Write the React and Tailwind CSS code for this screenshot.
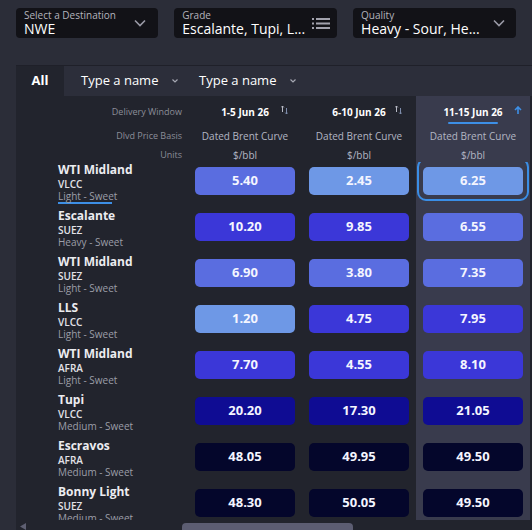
import React from 'react'

const grid = 'grid grid-cols-[172px_114px_114px_114px]'

const tone = {
  L: 'bg-[#6e98e6]',
  M: 'bg-[#5a6de0]',
  I: 'bg-[#3b37d8]',
  N: 'bg-[#0f0c93]',
  D: 'bg-[#04062b]',
}

const columns = [
  { window: '1-5 Jun 26', basis: 'Dated Brent Curve', units: '$/bbl' },
  { window: '6-10 Jun 26', basis: 'Dated Brent Curve', units: '$/bbl' },
  { window: '11-15 Jun 26', basis: 'Dated Brent Curve', units: '$/bbl', active: true },
]

const rows = [
  { name: 'WTI Midland', ship: 'VLCC', quality: 'Light - Sweet', cells: [['5.40', 'M'], ['2.45', 'L'], ['6.25', 'L']], selected: true },
  { name: 'Escalante', ship: 'SUEZ', quality: 'Heavy - Sweet', cells: [['10.20', 'I'], ['9.85', 'I'], ['6.55', 'M']] },
  { name: 'WTI Midland', ship: 'SUEZ', quality: 'Light - Sweet', cells: [['6.90', 'M'], ['3.80', 'M'], ['7.35', 'M']] },
  { name: 'LLS', ship: 'VLCC', quality: 'Light - Sweet', cells: [['1.20', 'L'], ['4.75', 'I'], ['7.95', 'I']] },
  { name: 'WTI Midland', ship: 'AFRA', quality: 'Light - Sweet', cells: [['7.70', 'I'], ['4.55', 'I'], ['8.10', 'I']] },
  { name: 'Tupi', ship: 'VLCC', quality: 'Medium - Sweet', cells: [['20.20', 'N'], ['17.30', 'N'], ['21.05', 'N']] },
  { name: 'Escravos', ship: 'AFRA', quality: 'Medium - Sweet', cells: [['48.05', 'D'], ['49.95', 'D'], ['49.50', 'D']] },
  { name: 'Bonny Light', ship: 'SUEZ', quality: 'Medium - Sweet', cells: [['48.30', 'D'], ['50.05', 'D'], ['49.50', 'D']] },
]

function Chevron() {
  return (
    <svg width="12" height="8" viewBox="0 0 12 8" fill="none">
      <path d="M1 1.5L6 6.5L11 1.5" stroke="#9a9aa6" strokeWidth="1.6" />
    </svg>
  )
}

function ListIcon() {
  return (
    <svg width="18" height="11" viewBox="0 0 18 11" fill="#a2a2ad">
      <rect x="0" y="0" width="2" height="2" />
      <rect x="4" y="0" width="14" height="2" />
      <rect x="0" y="4.5" width="2" height="2" />
      <rect x="4" y="4.5" width="14" height="2" />
      <rect x="0" y="9" width="2" height="2" />
      <rect x="4" y="9" width="14" height="2" />
    </svg>
  )
}

function SmallChevron() {
  return (
    <svg width="6" height="4" viewBox="0 0 6 4" fill="none">
      <path d="M0.5 0.5L3 3L5.5 0.5" stroke="#a6a7b2" strokeWidth="1.2" />
    </svg>
  )
}

function SortIcon() {
  return (
    <svg width="7" height="10" viewBox="0 0 7 10" fill="none">
      <path d="M1.5 7V1M0.2 2.4L1.5 1L2.8 2.4" stroke="#b9bbc6" />
      <path d="M5.5 3V9M4.2 7.6L5.5 9L6.8 7.6" stroke="#7e8cab" />
    </svg>
  )
}

function ArrowUp() {
  return (
    <svg width="8" height="8" viewBox="0 0 8 8" fill="none">
      <path d="M4 8V1.2M1 4L4 1L7 4" stroke="#3d8fe6" strokeWidth="1.6" />
    </svg>
  )
}

function Select({ label, value, className, icon }) {
  return (
    <div className={`${className} h-[30px] rounded-[4px] bg-[#121217] pl-2 flex items-center`}>
      <div className="flex-1 min-w-0 pt-[1px]">
        <div className="text-[10px] leading-[11px] text-[#b4b4bd]">{label}</div>
        <div className="text-[14px] leading-[16px] text-white whitespace-nowrap">{value}</div>
      </div>
      {icon}
    </div>
  )
}

export default function App() {
  return (
    <div className="w-[532px] h-[530px] overflow-hidden bg-[#2b2d38] font-['Open_Sans',sans-serif]">
      <div className="h-[65px] flex gap-4 px-4 pt-2">
        <Select className="w-[144px] pr-3" label="Select a Destination" value="NWE" icon={<Chevron />} />
        <Select className="w-[165px] pr-[7px]" label="Grade" value="Escalante, Tupi, L..." icon={<ListIcon />} />
        <Select className="w-[165px] pr-[11px]" label="Quality" value="Heavy - Sour, He..." icon={<Chevron />} />
      </div>

      <div className="ml-4 border-t border-[#1f2029]">
        <div className="h-[30px] flex items-center bg-[#2c2e3a] text-[13px] text-white">
          <div className="w-[48px] h-full bg-[#22242d] flex items-center justify-center font-bold text-[13px]">All</div>
          <div className="w-[119px] pl-[17px] flex items-center gap-[14px]">
            <span>Type a name</span>
            <SmallChevron />
          </div>
          <div className="pl-[16px] flex items-center gap-[14px]">
            <span>Type a name</span>
            <SmallChevron />
          </div>
        </div>

        <div className="h-[424px] overflow-hidden bg-[#22242d]">
          <div className={grid + ' h-[32px]'}>
            <div className="pr-[6px] pt-[9px] text-right text-[9px] leading-[14px] text-[#8b8d98]">Delivery Window</div>
            {columns.map((c) => (
              <div key={c.window} className={`relative pt-[9px] text-center ${c.active ? 'bg-[#393b4d]' : ''}`}>
                <div className="text-[10px] font-bold leading-[14px] text-white">{c.window}</div>
                {c.active && <div className="mx-auto mt-[3px] h-[2px] w-[50px] rounded bg-[#3d8fe6]" />}
                {c.active ? (
                  <span className="absolute top-[10px] right-[8px] flex"><ArrowUp /></span>
                ) : (
                  <span className="absolute top-[9px] right-[14px] flex"><SortIcon /></span>
                )}
              </div>
            ))}
          </div>
          <div className={grid + ' h-[16px]'}>
            <div className="pr-[6px] text-right text-[9px] leading-[16px] text-[#8b8d98]">Dlvd Price Basis</div>
            {columns.map((c) => (
              <div key={c.window} className={`text-center text-[10px] leading-[16px] text-[#b3b6c3] ${c.active ? 'bg-[#393b4d]' : ''}`}>{c.basis}</div>
            ))}
          </div>
          <div className={grid + ' h-[18px]'}>
            <div className="pr-[6px] pt-[4px] text-right text-[9px] leading-[14px] text-[#8b8d98]">Units</div>
            {columns.map((c) => (
              <div key={c.window} className={`pt-[4px] text-center text-[10px] leading-[14px] text-[#b3b6c3] ${c.active ? 'bg-[#393b4d]' : ''}`}>{c.units}</div>
            ))}
          </div>

          {rows.map((r, i) => (
            <div key={i} className={grid + ' h-[46px]'}>
              <div className="pl-[42px]">
                <div className="text-[12px] font-bold leading-[16px] text-[#ececf0]">{r.name}</div>
                <div className="text-[10px] font-semibold leading-[13px] text-[#e2e2e8]">{r.ship}</div>
                <div className="text-[10px] leading-[11px] text-[#9c9ea8]">{r.quality}</div>
                {r.selected && <div className="h-[2px] w-[54px] bg-[#3d8fe6]" />}
              </div>
              {r.cells.map(([v, t], j) => {
                const active = columns[j].active
                return (
                  <div key={j} className={`relative overflow-hidden px-[7px] pt-[5px] ${active ? 'bg-[#393b4d]' : ''}`}>
                    <div className={`relative h-[28px] rounded-[5px] ${tone[t]} flex items-center justify-center text-[13px] font-bold text-[#f4f5ff]`}>
                      {v}
                      {r.selected && active && (
                        <span className="absolute -left-[6px] -right-[6px] -top-[9px] -bottom-[6px] rounded-[9px] border-2 border-[#3a8ee6]" />
                      )}
                    </div>
                  </div>
                )
              })}
            </div>
          ))}
        </div>

        <div className="h-[10px] bg-[#22242d] flex items-end">
          <svg className="ml-[4px] mb-0" width="6" height="7" viewBox="0 0 6 7" fill="#5e5f72">
            <path d="M0 3.5L6 0V7Z" />
          </svg>
          <div className="ml-[156px] w-[171px] h-[7px] rounded-t-[4px] bg-[#5c5d72]" />
        </div>
      </div>
    </div>
  )
}
